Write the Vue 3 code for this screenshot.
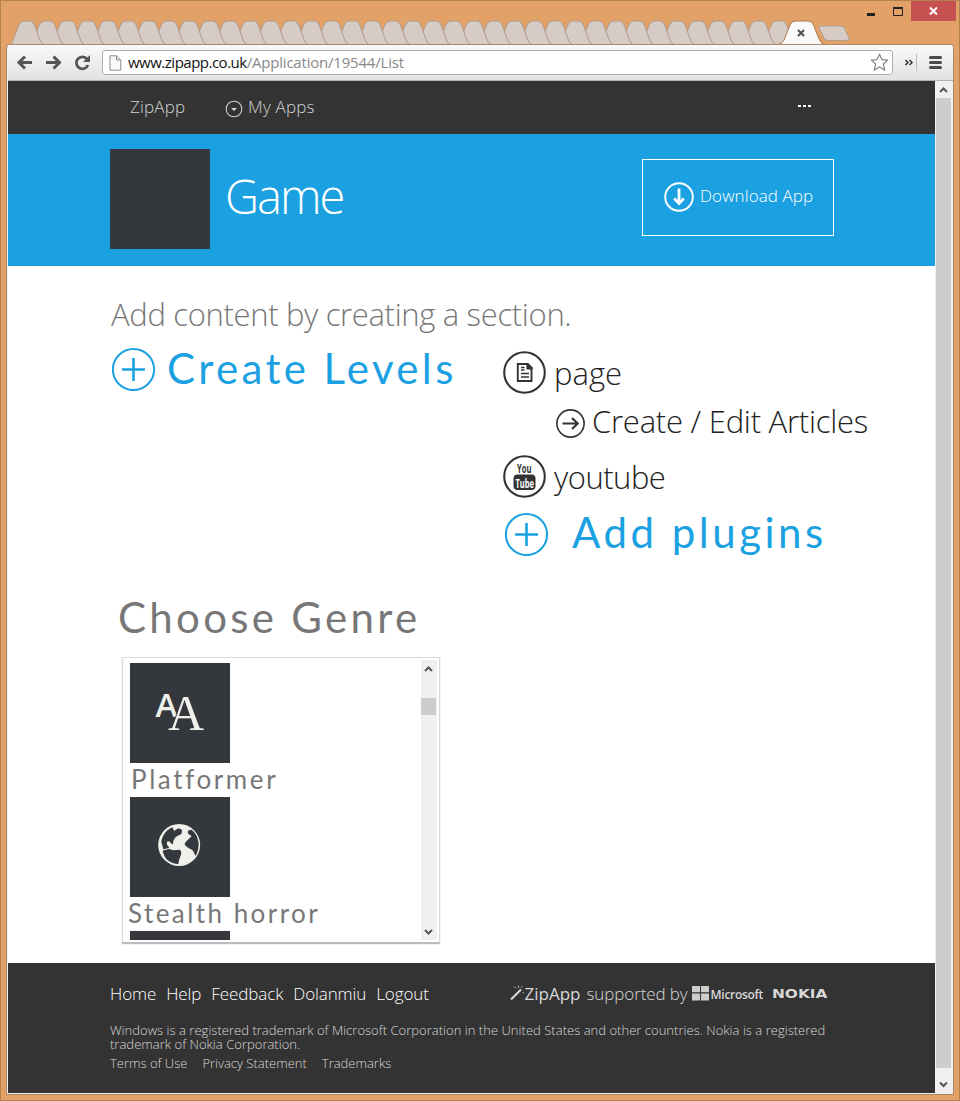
<script setup>
const inactiveTabs = Array.from({ length: 38 }, (_, i) => 17 + (37 - i) * 20.33)
const genres = [
  { name: 'Platformer', icon: 'font' },
  { name: 'Stealth horror', icon: 'globe' },
  { name: '', icon: '' },
]
const footerLinks = ['Home', 'Help', 'Feedback', 'Dolanmiu', 'Logout']
const legalLinks = ['Terms of Use', 'Privacy Statement', 'Trademarks']
</script>

<template>
  <div class="window">
    <header class="titlebar">
      <svg class="tabs" width="958" height="44" viewBox="1 1 958 44">
        <path
          v-for="x in inactiveTabs"
          :key="x"
          class="tab"
          :transform="`translate(${x} 0)`"
          d="M-7 44.500C-5 44 -4.500 42 -4 40L2 25Q3.500 21 7 21H13Q16 21 17.500 25L22.500 39Q24 44 27 44.500"
        />
        <path class="tab-active" d="M779 46C782 44 783 42 784 40L790 25Q791.500 21 795 21H808Q812 21 813.500 25L819 39Q821 44 825 44.500V46Z" />
        <path class="tab-edge" d="M777 44.500C781 44 783 42 784 40L790 25Q791.500 21 795 21H808Q812 21 813.500 25L819 39Q821 44 825 44.500" />
        <path class="tab" d="M820.500 26H841Q844 26 845 29L849 38Q849.500 40.500 847 40.500H828Q825 40.500 824 38L819 28Q818.500 26 820.500 26Z" />
        <path class="tab-close" d="M798 30L804 36M804 30L798 36" />
      </svg>
      <div class="controls">
        <svg width="44" height="20" viewBox="0 0 44 20">
          <path d="M0 13.500H8" stroke="#222" stroke-width="3" />
          <path d="M26.500 7.500H35.500V14.500H26.500Z" fill="none" stroke="#222" stroke-width="1" />
          <path d="M26 7H36" stroke="#222" stroke-width="2" />
        </svg>
        <span class="close">
          <svg width="9" height="8" viewBox="0 0 9 8"><path d="M1 .5L8 7.500M8 .5L1 7.500" stroke="#fff" stroke-width="2" /></svg>
        </span>
      </div>
    </header>

    <div class="frame">
      <div class="toolbar">
        <svg class="nav-icons" width="90" height="36" viewBox="8 45 90 36" fill="none" stroke="#555" stroke-width="3">
          <path d="M19.500 62.500H33M26 56.500L20 62.500L26 68.500" />
          <path d="M47 62.500H60.500M54.500 56.500L60.500 62.500L54.500 68.500" />
          <path d="M88 59A6 6 0 1 0 89 65" stroke-width="2.800" />
          <path d="M91 55V62H84Z" fill="#555" stroke="none" />
        </svg>
        <div class="address">
          <svg width="13" height="16" viewBox="0 0 13 16">
            <path d="M1 .8H7.500L11.800 5V15.200H1Z" fill="#fafafa" stroke="#8a8a8a" />
            <path d="M7.500 .8V5H11.800" fill="none" stroke="#8a8a8a" />
          </svg>
          <span class="url"><b>www.zipapp.co.uk</b>/Application/19544/List</span>
          <svg class="star" width="19" height="19" viewBox="0 0 19 19">
            <path d="M9.500 1.200L11.900 6.600L17.800 7.100L13.300 11L14.800 17.300L9.500 14.100L4.200 17.300L5.700 11L1.200 7.100L7.100 6.600Z" fill="#fff" stroke="#858585" stroke-width="1.200" stroke-linejoin="round" />
          </svg>
        </div>
        <svg width="54" height="36" viewBox="897 45 54 36" fill="none">
          <path d="M905.500 60L908 62.500L905.500 65M909.500 60L912 62.500L909.500 65" stroke="#333" stroke-width="1.500" />
          <path d="M916.500 54V71" stroke="#bbb" />
          <path d="M930.500 57.500H940.500M930.500 62.500H940.500M930.500 67.500H940.500" stroke="#4a4a4a" stroke-width="3" stroke-linecap="round" />
        </svg>
      </div>

      <div class="viewport">
        <div class="page">
          <nav class="topnav">
            <span class="brand">ZipApp</span>
            <span class="myapps">
              <svg width="18" height="18" viewBox="0 0 18 18">
                <circle cx="9" cy="9" r="7.800" fill="none" stroke="#d0d0d0" stroke-width="1.100" />
                <path d="M6 8H12L9 11Z" fill="#ddd" />
              </svg>
              <span>My Apps</span>
            </span>
            <span class="dots"><i></i><i></i><i></i></span>
          </nav>

          <section class="hero">
            <div class="thumb"></div>
            <h1>Game</h1>
            <div class="download">
              <svg width="30" height="30" viewBox="0 0 30 30" fill="none" stroke="#fff">
                <circle cx="15" cy="15" r="13.800" stroke-width="1.900" />
                <path d="M15 6.500V21.500" stroke-width="2.800" />
                <path d="M10.200 16.500L15 21.500L19.800 16.500" stroke-width="2.800" />
              </svg>
              <span>Download App</span>
            </div>
          </section>

          <main class="content">
            <h2>Add content by creating a section.</h2>
            <div class="columns">
              <div class="action create">
                <svg width="44" height="44" viewBox="0 0 44 44" class="plus"><circle cx="21.500" cy="22.500" r="20.600" /><path d="M10 22.500H33M21.500 11V34" /></svg>
                <span>Create Levels</span>
              </div>
              <div class="sections">
                <div class="entry">
                  <svg width="43" height="43" viewBox="0 0 43 43">
                    <circle cx="21.500" cy="21.500" r="20.300" class="ring" />
                    <path d="M14.800 13H24.500L28.500 17V30H14.800Z" fill="none" stroke="#333" stroke-width="1.900" />
                    <path d="M23.500 12H25L29.500 16.500V18.500H23.500Z" fill="#333" />
                    <path d="M18 16.500H21.500M18 19H21.500M18 22.500H26M18 26H26" stroke="#333" stroke-width="1.500" />
                  </svg>
                  <span>page</span>
                </div>
                <div class="entry sub">
                  <svg width="30" height="30" viewBox="0 0 30 30" fill="none" stroke="#333">
                    <circle cx="14.500" cy="14.500" r="13.600" stroke-width="1.600" />
                    <path d="M6.500 14.500H21.500M16 9L21.700 14.500L16 20" stroke-width="2.200" />
                  </svg>
                  <span>Create / Edit Articles</span>
                </div>
                <div class="entry youtube">
                  <svg width="43" height="43" viewBox="0 0 43 43">
                    <circle cx="21.500" cy="21.500" r="20.300" class="ring" />
                    <text x="14" y="18" textLength="14.500" lengthAdjust="spacingAndGlyphs" class="yt">You</text>
                    <rect x="10.500" y="19.500" width="22" height="15.500" rx="4" fill="#333" />
                    <text x="12.500" y="32.500" textLength="18.500" lengthAdjust="spacingAndGlyphs" class="yt light">Tube</text>
                  </svg>
                  <span>youtube</span>
                </div>
                <div class="action plugins">
                  <svg width="44" height="44" viewBox="0 0 44 44" class="plus"><circle cx="21.500" cy="22.500" r="20.600" /><path d="M10 22.500H33M21.500 11V34" /></svg>
                  <span>Add plugins</span>
                </div>
              </div>
            </div>

            <h3>Choose Genre</h3>
            <div class="genres">
              <ul class="genre-list">
                <li v-for="(g, i) in genres" :key="i">
                  <div class="tile">
                    <svg v-if="g.icon === 'font'" width="100" height="100" viewBox="0 0 100 100" fill="#f0f0eb">
                      <text x="25.500" y="54" class="a-sans">A</text>
                      <text x="38" y="67" class="a-serif">A</text>
                    </svg>
                    <svg v-else-if="g.icon === 'globe'" width="100" height="100" viewBox="60 111 300 300">
                      <circle cx="207.500" cy="255" r="63" fill="#f0f0eb" />
                      <g fill="#34373c">
                        <path d="M154 246C156 227 170 208 188 202L192 213L202 206Q212 203 216 211Q217 224 206 226Q196 229 191 240Q188 248 189 252Q184 254 181 247Q174 240 170 248Q170 256 178 264L160 268Q157 255 154 246Z" />
                        <path d="M236 211L245 209Q263 223 266 250Q266 272 257 288L248 271L234 263L224 254Q224 248 230 243L245 228L235 222Q231 215 236 211Z" />
                        <path d="M158 272Q166 269 178 267L190 271L209 269Q216 275 213 284L208 297L205 312Q187 312 173 301Q161 289 158 272Z" />
                      </g>
                    </svg>
                  </div>
                  <p v-if="g.name">{{ g.name }}</p>
                </li>
              </ul>
              <div class="scrollbar inner">
                <svg width="16" height="17" viewBox="0 0 16 17"><path d="M4 11L7.500 7.500L11 11" /></svg>
                <i class="grip"></i>
                <svg class="down" width="16" height="17" viewBox="0 0 16 17"><path d="M4 7L7.500 10.500L11 7" /></svg>
              </div>
            </div>
          </main>

          <footer>
            <div class="foot-row">
              <span v-for="l in footerLinks" :key="l" class="foot-link">{{ l }}</span>
              <div class="sponsors">
                <svg width="15" height="16" viewBox="0 0 15 16" fill="none" stroke="#ddd">
                  <path d="M1 14.500L11 4.500" stroke-width="2" />
                  <path d="M4 1.500L6 3.500M8.500 .5V3M12.500 1L11 2.500M12.500 7L14 8.500" stroke="#bbaecb" />
                </svg>
                <b>ZipApp</b>
                <span class="supported">supported by</span>
                <svg width="17" height="16" viewBox="0 0 17 16" fill="#ccc"><path d="M0 1H8V7.300H0ZM9 1H17V7.300H9ZM0 8.500H8V15.500H0ZM9 8.500H17V15.500H9Z" /></svg>
                <span class="microsoft">Microsoft</span>
                <span class="nokia">NOKIA</span>
              </div>
            </div>
            <p>Windows is a registered trademark of Microsoft Corporation in the United States and other countries. Nokia is a registered<br />trademark of Nokia Corporation.</p>
            <div class="legal"><span v-for="l in legalLinks" :key="l">{{ l }}</span></div>
          </footer>
        </div>
        <div class="scrollbar outer">
          <svg width="15" height="17" viewBox="0 0 15 17"><path d="M4 11L7.500 7.500L11 11" /></svg>
          <i class="grip"></i>
          <svg class="down" width="15" height="17" viewBox="0 0 15 17"><path d="M4 6.500L7.500 10L11 6.500" /></svg>
        </div>
      </div>
    </div>
  </div>
</template>

<style>
body { margin: 0; }
</style>

<style scoped>
* { box-sizing: border-box; }
h1, h2, h3, p, ul { margin: 0; padding: 0; font-weight: 300; }
svg { display: block; flex: none; }
.window {
  width: 960px; height: 1101px; overflow: hidden;
  border: 1px solid #b3804f; background: #e2a167;
  font-family: "Open Sans", sans-serif; font-weight: 300;
  display: flex; flex-direction: column; white-space: nowrap;
}
.titlebar { position: relative; height: 43px; flex: none; }
.tabs { overflow: visible; }
.tab { fill: #d6ccc5; stroke: #b09c8c; stroke-width: 1; }
.tab-active { fill: #fafafa; }
.tab-edge { fill: none; stroke: #a8784a; stroke-width: 1; }
.tab-close { stroke: #4d4d4d; stroke-width: 2; }
.controls { position: absolute; top: 0; right: 3px; display: flex; }
.close { width: 45px; height: 20px; background: #c75050; display: flex; align-items: center; justify-content: center; }
.frame {
  position: relative; margin: 0 5px 0 5px; height: 1051px; flex: none;
  border: 1px solid #a8876a; border-radius: 4px 4px 0 0; background: #eee;
  padding: 0 0 1px 1px; display: flex; flex-direction: column; overflow: hidden;
}
.toolbar {
  height: 36px; flex: none; display: flex; align-items: center;
  background: linear-gradient(#f9f9f9, #e2e2e2); border-bottom: 1px solid #b0b0b0;
}
.nav-icons { position: relative; left: -1px; }
.address {
  width: 791px; height: 25px; margin: 0 4px; border: 1px solid #adadad; border-radius: 3px;
  background: #fff; display: flex; align-items: center; padding: 0 3px 0 6px;
}
.url { margin-left: 6px; font-size: 15px; letter-spacing: -.2px; font-weight: 400; line-height: 22px; color: #888; padding-bottom: 1px; }
.url b { font-weight: 400; color: #111; letter-spacing: -.5px; }
.star { margin-left: auto; }
.viewport { display: flex; height: 1012px; flex: none; }
.page { width: 927px; flex: none; display: flex; flex-direction: column; background: #fff; }
.topnav { height: 53px; flex: none; background: #333; color: #d4d4d4; display: flex; align-items: center; padding: 0 123px 2px 122px; font-size: 17px; letter-spacing: .2px; }
.brand { width: 95px; }
.myapps { display: flex; align-items: center; gap: 5px; }
.myapps svg { position: relative; top: 2px; }
.dots { margin-left: auto; display: flex; gap: 2px; padding-right: 1px; position: relative; top: -1px; }
.dots i { width: 3px; height: 2px; background: #fff; }
.hero { height: 132px; flex: none; background: #1ba1e2; color: #fff; display: flex; padding: 15px 101px 0 102px; }
.thumb { width: 100px; height: 100px; background: #34373c; }
h1 { margin: 16px 0 0 15px; font-size: 47px; letter-spacing: -2px; line-height: 62px; }
.download {
  margin: 10px 0 0 auto; width: 192px; height: 77px; border: 1px solid #fff;
  display: flex; align-items: center; gap: 6px; padding: 0 0 3px 21px; font-size: 17px; letter-spacing: .1px;
}
.download svg { position: relative; top: 1px; }
.download span { position: relative; top: -1px; }
.content { height: 697px; flex: none; padding: 27px 0 0 102px; background: #fff; }
h2 { margin-left: 1px; font-size: 31px; letter-spacing: -.33px; line-height: 42px; height: 40px; color: #777; }
.columns { display: flex; margin-top: 14px; height: 236px; }
.action { display: flex; align-items: center; color: #1ba1e2; font: 400 42px/44px Lato, sans-serif; letter-spacing: 3.350px; }
.action span { position: relative; top: -1px; }
.plus { fill: none; stroke: #1ba1e2; stroke-width: 2; }
.plus path { stroke-width: 2.600; }
.create { width: 393px; height: 44px; padding-left: 2px; gap: 11px; }
.sections { padding-top: 3px; }
.entry { display: flex; align-items: center; gap: 8px; color: #222; font-size: 31px; line-height: 43px; height: 43px; margin-bottom: 61px; padding-top: 2px; }
.entry svg { position: relative; top: 0; }
.entry span { position: relative; top: 1px; letter-spacing: 0; }
.ring { fill: none; stroke: #333; stroke-width: 2.100; }
.entry.sub { height: 30px; margin: -46px 0 16px 53px; padding: 0; gap: 6px; line-height: 30px; }
.entry.sub svg { top: 1px; }
.entry.sub span { top: -2px; letter-spacing: -.23px; }
.entry.youtube { margin-bottom: 15px; }
.entry.youtube span { letter-spacing: -.5px; }
.yt { font: 700 13px "Open Sans", sans-serif; fill: #333; }
.yt.light { fill: #fff; }
.plugins { margin-left: 2px; gap: 23px; }
.plugins span { top: -2px; letter-spacing: 3.500px; }
h3 { margin-left: 8px; font: 400 42px/50px Lato, sans-serif; letter-spacing: 3.300px; color: #777; margin-top: 9px; }
.genres {
  margin: 15px 0 0 12px; width: 318px; height: 286px; padding: 2px; border: 1px solid #d9d9d9;
  border-bottom-color: #bbb; box-shadow: 0 1px 1px #bbb; display: flex; justify-content: space-between;
}
.genre-list { list-style: none; height: 280px; padding: 3px 0 0 4px; overflow: hidden; }
.genre-list li { height: 134px; }
.genre-list p { height: 34px; margin-left: 2px; font: 400 26px/33px Lato, sans-serif; letter-spacing: 2.600px; color: #777; }
.genre-list li:nth-child(2) p { margin-left: -1px; letter-spacing: 2.450px; line-height: 32px; }
.tile { width: 100px; height: 100px; background: #34373c; margin-left: 1px; }
.a-sans { font: 600 33px "Open Sans", sans-serif; }
.a-serif { font: 50px "Liberation Serif", serif; stroke: #34373c; stroke-width: 2px; paint-order: stroke; }
.scrollbar { background: #f0f0f0; display: flex; flex-direction: column; flex: none; }
.scrollbar path { fill: none; stroke: #555; stroke-width: 2; }
.grip { display: block; background: #cdcdcd; }
.down { margin-top: auto; }
.inner { width: 16px; height: 280px; }
.inner .grip { margin-top: 21px; width: 15px; height: 17px; }
.outer { width: 17px; padding-left: 1px; height: 1012px; }
.outer .grip { width: 15px; height: 970px; }
footer { height: 130px; flex: none; background: #333; color: #d8d8d8; padding: 15px 0 0 102px; }
.foot-row { display: flex; align-items: center; height: 30px; width: 720px; font-size: 17px; }
.foot-link { color: #fff; margin-right: 10px; letter-spacing: -.1px; }
.sponsors { margin-left: auto; display: flex; align-items: center; }
.sponsors b { font-weight: 400; }
.supported { margin: 0 4px 0 6px; letter-spacing: -.1px; }
.microsoft { font-size: 12px; font-weight: 600; letter-spacing: -.3px; margin: 3px 9px 0 2px; }
.nokia { width: 58px; font: 700 12px "DejaVu Sans", sans-serif; transform: scaleX(1.280); transform-origin: left; margin-top: 2px; }
footer p { margin-top: 15px; font-size: 13px; line-height: 14px; letter-spacing: .025px; }
.legal { display: flex; gap: 15px; margin-top: 5px; font-size: 13px; line-height: 14px; }
</style>
